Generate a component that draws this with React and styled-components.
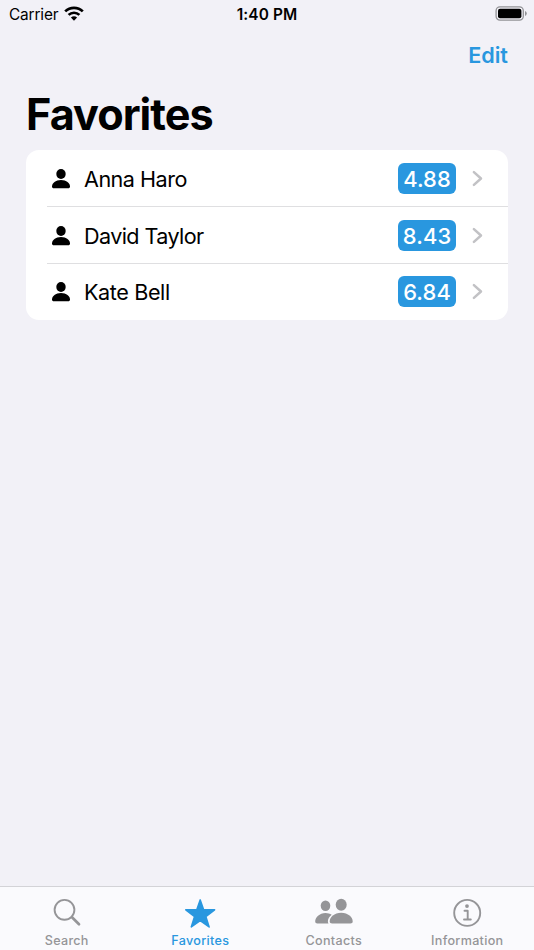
import React from 'react';
import styled, { createGlobalStyle } from 'styled-components';

const Global = createGlobalStyle`
  * { box-sizing: border-box; }
  body { margin: 0; background: #f2f1f7; }
`;

const Screen = styled.div`
  width: 534px;
  height: 950px;
  display: flex;
  flex-direction: column;
  background: #f2f1f7;
  color: #000;
  font-family: Inter, "Liberation Sans", sans-serif;
  overflow: hidden;
`;

const StatusBar = styled.header`
  height: 28px;
  padding: 0 7px 0 9px;
  display: grid;
  grid-template-columns: 1fr auto 1fr;
  align-items: center;
  line-height: 28px;
  font-size: 15.4px;
`;

const Carrier = styled.div`
  display: flex;
  align-items: center;
  gap: 6px;
  padding-top: 1px;
  letter-spacing: -0.15px;
  svg { margin-top: -3px; }
`;

const Time = styled.div`
  padding: 1px 2px 0 0;
  font-weight: 600;
  letter-spacing: 0.1px;
`;

const BatterySlot = styled.div`
  display: flex;
  justify-content: flex-end;
  svg { margin-top: -2px; }
`;

const NavBar = styled.nav`
  height: 57px;
  padding: 0 26px 3px;
  display: flex;
  align-items: center;
  justify-content: flex-end;
`;

const EditButton = styled.button`
  border: 0;
  padding: 0;
  background: none;
  color: #2997df;
  font: 600 21.6px/28px Inter, sans-serif;
`;

const Title = styled.h1`
  height: 65px;
  margin: 0;
  padding: 3px 26px 0;
  font-size: 43.2px;
  line-height: 53px;
  font-weight: 700;
  letter-spacing: -0.97px;
`;

const List = styled.main`
  margin: 0 26px;
  height: 170px;
  border-radius: 13px;
  background: #fff;
  display: grid;
  grid-template-rows: 57px 57px 56px;
  overflow: hidden;
`;

const Row = styled.div`
  display: flex;
  align-items: center;
  margin-left: 21px;
  padding: ${({ $last }) => ($last ? '0 25px 1px 4px' : '1px 25px 0 4px')};
  border-bottom: ${({ $last }) => ($last ? '0' : '1px solid #dfdfe1')};
`;

const Name = styled.span`
  flex: 1;
  margin-left: 13px;
  padding-top: 1px;
  font-size: 21.6px;
  line-height: 28px;
  letter-spacing: ${({ $tracking }) => $tracking}px;
`;

const Score = styled.span`
  width: 58px;
  height: 31px;
  margin-right: 16px;
  border-radius: 6px;
  background: #2997df;
  color: #fff;
  text-align: center;
  font-size: 21.9px;
  line-height: 32px;
  font-weight: 550;
  letter-spacing: 0.1px;
`;

const TabBar = styled.footer`
  height: 64px;
  margin-top: auto;
  border-top: 1px solid #d3d3d7;
  background: #fafafd;
  display: grid;
  grid-template-columns: repeat(4, 1fr);
`;

const Tab = styled.div`
  display: flex;
  flex-direction: column;
  align-items: center;
  color: ${({ $active }) => ($active ? '#2997df' : '#959598')};
  font-size: 12.6px;
  line-height: 16px;
  font-weight: 500;
  letter-spacing: ${({ $tracking }) => $tracking}px;
`;

const TabIcon = styled.svg`
  display: block;
  width: 42px;
  height: 36px;
  margin: 8px 0 2px;
`;

const WifiIcon = () => (
  <svg width="20" height="15" viewBox="0 0 20 15" fill="none" stroke="#000" strokeWidth="2.7">
    <path d="M1.2 5.4a12.6 12.6 0 0 1 17.6 0" />
    <path d="M4.6 8.9a7.8 7.8 0 0 1 10.8 0" />
    <path d="M10 14.7 6.9 11.6a4.5 4.5 0 0 1 6.2 0Z" fill="#000" stroke="none" />
  </svg>
);

const BatteryIcon = () => (
  <svg width="32" height="15" viewBox="0 0 32 15">
    <rect x="1.1" y=".9" width="27.2" height="13.2" rx="3.8" fill="none" stroke="#929296" strokeWidth="1.3" />
    <rect x="3" y="2.8" width="23.4" height="9.4" rx="2" />
    <path d="M30 5.1q1.8.7 1.8 2.4T30 9.9Z" fill="#929296" />
  </svg>
);

const PersonIcon = () => (
  <svg width="20" height="22" viewBox="0 0 20 22">
    <ellipse cx="10" cy="6" rx="4.7" ry="4.9" />
    <path d="M3 20.3c-1.4 0-2-.7-2-1.8C1 15.4 4.6 12.1 10 12.1s9 3.3 9 6.4c0 1.1-.6 1.8-2 1.8Z" />
  </svg>
);

const Chevron = () => (
  <svg width="11" height="17" viewBox="0 0 11 17" fill="none" stroke="#c2c2c5" strokeWidth="2.5" strokeLinecap="round" strokeLinejoin="round">
    <path d="m1.9 2.1 7.1 6.4-7.1 6.4" />
  </svg>
);

const SearchIcon = () => (
  <TabIcon viewBox="0 0 42 36" fill="none" stroke="currentColor" strokeLinecap="round">
    <circle cx="18.5" cy="14.8" r="9.9" strokeWidth="1.9" />
    <path d="m26 22.2 7 7" strokeWidth="2.7" />
  </TabIcon>
);

const StarIcon = () => (
  <TabIcon viewBox="0 0 42 36" fill="currentColor" stroke="currentColor" strokeWidth="1.6" strokeLinejoin="round">
    <path d="m21.2 4.9 3.4 9.9h11l-8.8 6.7 3.3 10.4-8.9-6.3-8.9 6.3 3.3-10.4-8.8-6.7h11Z" />
  </TabIcon>
);

const PeopleIcon = () => (
  <TabIcon viewBox="0 0 42 36" fill="currentColor">
    <ellipse cx="12.5" cy="10.8" rx="4.8" ry="5.3" />
    <path d="M4.4 28.4C3 28.4 2.2 27.7 2.2 26.4 2.2 22.5 6.5 18 12.5 18c2.4 0 4.5.7 6.2 1.8-2.4 1.8-3.8 4-3.8 6.5 0 .8.2 1.5.6 2.1Z" />
    <ellipse cx="28.2" cy="9.8" rx="5.5" ry="6" />
    <path d="M19.1 28.4c-1.6 0-2.4-.7-2.4-2 0-4.1 4.6-8.6 11.5-8.6s11.5 4.5 11.5 8.6c0 1.3-.8 2-2.4 2Z" />
  </TabIcon>
);

const InfoIcon = () => (
  <TabIcon viewBox="0 0 42 36" fill="none" stroke="currentColor" strokeLinecap="round" strokeLinejoin="round">
    <circle cx="21.2" cy="17.9" r="13" strokeWidth="1.9" />
    <circle cx="21" cy="11.1" r="1.9" fill="currentColor" stroke="none" />
    <path d="M18.5 15.7h3.2v8.6M18 24.5h6.8" strokeWidth="1.9" />
  </TabIcon>
);

const people = [
  { name: 'Anna Haro', score: '4.88', tracking: -0.52 },
  { name: 'David Taylor', score: '8.43', tracking: -0.6 },
  { name: 'Kate Bell', score: '6.84', tracking: -0.4 },
];

const tabs = [
  { label: 'Search', Icon: SearchIcon, tracking: 0.28 },
  { label: 'Favorites', Icon: StarIcon, tracking: 0.3, active: true },
  { label: 'Contacts', Icon: PeopleIcon, tracking: 0.3 },
  { label: 'Information', Icon: InfoIcon, tracking: 0.3 },
];

export default function App() {
  return (
    <Screen>
      <Global />
      <StatusBar>
        <Carrier>Carrier <WifiIcon /></Carrier>
        <Time>1:40 PM</Time>
        <BatterySlot><BatteryIcon /></BatterySlot>
      </StatusBar>
      <NavBar><EditButton>Edit</EditButton></NavBar>
      <Title>Favorites</Title>
      <List>
        {people.map(({ name, score, tracking }, i) => (
          <Row key={name} $last={i === people.length - 1}>
            <PersonIcon />
            <Name $tracking={tracking}>{name}</Name>
            <Score>{score}</Score>
            <Chevron />
          </Row>
        ))}
      </List>
      <TabBar>
        {tabs.map(({ label, Icon, tracking, active }) => (
          <Tab key={label} $active={active} $tracking={tracking}>
            <Icon />
            {label}
          </Tab>
        ))}
      </TabBar>
    </Screen>
  );
}
